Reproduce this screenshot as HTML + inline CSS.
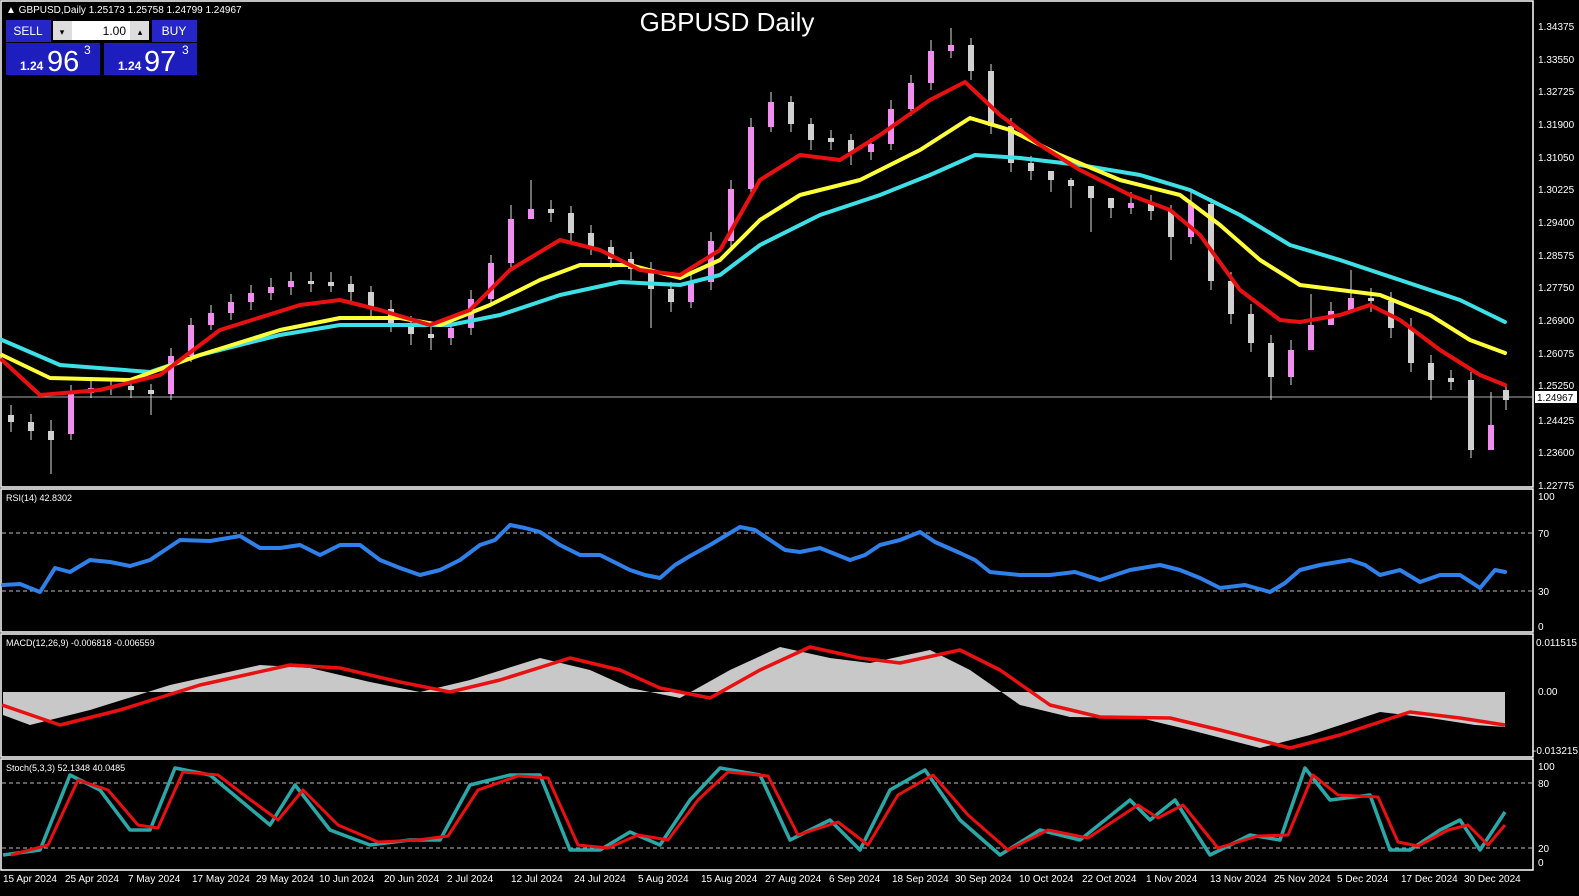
<!DOCTYPE html>
<html><head><meta charset="utf-8"><style>
html,body{margin:0;padding:0;background:#000;width:1579px;height:896px;overflow:hidden}
svg{display:block}
text{font-family:"Liberation Sans",sans-serif}
</style></head><body>
<svg width="1579" height="896" viewBox="0 0 1579 896" xmlns="http://www.w3.org/2000/svg">
<rect width="1579" height="896" fill="#000"/>
<g stroke="#fff" stroke-width="1.5" fill="none">
<rect x="1" y="1" width="1532" height="486"/>
<rect x="1" y="489" width="1532" height="143"/>
<rect x="1" y="634" width="1532" height="123"/>
<rect x="1" y="759" width="1532" height="111"/>
</g>
<g stroke="#bbb" stroke-dasharray="4,3" stroke-width="1">
<line x1="2" y1="533" x2="1532" y2="533"/><line x1="2" y1="591" x2="1532" y2="591"/>
<line x1="2" y1="783" x2="1532" y2="783"/><line x1="2" y1="848" x2="1532" y2="848"/>
</g>
<line x1="2" y1="397" x2="1532" y2="397" stroke="#aaa" stroke-width="1"/>

<!-- MACD histogram -->
<polygon fill="#c8c8c8" points="3,692 3,715 30,725 90,710 170,685 260,665 310,668 370,682 420,692 470,680 540,658 590,670 630,688 680,698 730,670 780,647 830,658 870,663 930,650 970,670 1020,705 1070,717 1140,718 1190,730 1260,748 1310,735 1380,712 1430,718 1475,725 1505,727 1505,692"/>

<!-- candle wicks -->
<path fill="none" stroke="#ddd" stroke-width="1" d="M11 405V432 M31 414V440 M51 420V474 M71 385V440 M91 380V398 M111 378V395 M131 380V398 M151 384V415 M171 348V400 M191 318V362 M211 305V330 M231 294V320 M251 285V310 M271 278V300 M291 272V295 M311 272V292 M331 272V292 M351 276V302 M371 286V318 M391 300V332 M411 316V345 M431 326V350 M451 320V345 M471 290V335 M491 255V305 M511 205V270 M531 180V218 M551 200V222 M571 206V242 M591 225V255 M611 240V268 M631 252V280 M651 262V328 M671 282V312 M691 274V308 M711 232V290 M731 180V248 M751 118V196 M771 92V132 M791 96V132 M811 118V150 M831 130V150 M851 134V165 M871 138V160 M891 100V150 M911 75V116 M931 40V90 M951 28V58 M971 38V80 M991 64V134 M1011 118V172 M1031 156V180 M1051 172V192 M1071 178V208 M1091 190V232 M1111 198V218 M1131 192V214 M1151 195V220 M1171 205V260 M1191 190V244 M1211 198V290 M1231 272V324 M1251 304V352 M1271 335V400 M1291 340V385 M1311 294V335 M1331 302V320 M1351 270V306 M1371 288V312 M1391 292V338 M1411 318V372 M1431 355V400 M1451 370V390 M1471 372V458 M1491 392V448 M1506 385V410"/>
<!-- grey bodies -->
<path fill="none" stroke="#d0d0d0" stroke-width="6" d="M11 415V422 M31 422V431 M51 431V440 M131 386V390 M151 390V394 M311 281V284 M331 282V286 M351 284V292 M371 292V309 M391 309V324 M411 324V334 M431 334V338 M551 209V213 M571 213V233 M591 233V247 M611 247V259 M631 259V269 M651 269V289 M671 289V302 M791 102V124 M811 124V140 M831 138V142 M851 140V152 M971 45V71 M991 71V126 M1011 126V163 M1031 163V171 M1051 171V180 M1071 180V186 M1091 186V198 M1111 198V208 M1151 203V211 M1171 211V237 M1211 204V281 M1231 281V314 M1251 314V343 M1271 343V377 M1371 298V301 M1391 301V328 M1411 328V363 M1431 363V380 M1451 378V382 M1471 380V450 M1506 390V400"/>
<!-- pink bodies -->
<path fill="none" stroke="#f08ef0" stroke-width="6" d="M71 434V393 M91 393V388 M111 388V386 M171 394V356 M191 356V325 M211 325V313 M231 313V302 M251 302V293 M271 293V287 M291 287V281 M451 338V328 M471 328V299 M491 299V263 M511 263V219 M531 219V209 M691 302V282 M711 282V241 M731 241V189 M751 189V127 M771 127V102 M871 152V144 M891 144V109 M911 109V83 M931 83V51 M951 51V45 M1131 208V203 M1191 237V204 M1291 377V350 M1311 350V325 M1331 325V311 M1351 311V298 M1491 450V425"/>

<!-- MAs -->
<g fill="none" stroke-width="4" stroke-linejoin="round" stroke-linecap="round">
<polyline stroke="#3ee0e8" points="2,340 60,365 150,372 200,355 280,335 340,325 400,325 450,325 500,315 560,295 620,282 680,285 720,275 760,245 820,215 880,195 930,175 975,155 1020,158 1080,165 1140,175 1190,190 1240,215 1290,245 1340,260 1400,280 1460,300 1505,322"/>
<polyline stroke="#ffff3a" points="2,355 50,378 130,380 200,355 280,330 340,318 400,318 440,325 490,305 540,280 580,265 630,265 680,278 720,260 760,220 800,195 860,180 920,150 970,118 1010,130 1060,155 1120,180 1180,195 1220,225 1260,260 1300,285 1340,290 1380,295 1430,315 1470,340 1505,353"/>
<polyline stroke="#e81010" points="2,360 40,395 100,390 160,375 220,330 300,305 340,300 380,310 430,325 470,310 510,270 560,240 600,250 640,270 680,275 720,250 760,180 800,155 840,160 880,135 930,100 965,82 1000,115 1040,145 1080,170 1130,195 1170,210 1200,235 1240,290 1280,320 1300,322 1340,315 1370,305 1400,320 1440,350 1480,375 1505,385"/>
<polyline stroke="#2f80e8" points="3,585 20,584 40,592 55,568 70,572 90,560 110,562 130,566 150,560 180,540 210,541 240,536 260,548 280,548 300,545 320,555 340,545 360,545 380,560 400,568 420,575 440,570 460,560 480,545 495,540 510,525 525,528 540,532 560,545 580,555 600,555 630,570 645,575 660,578 675,565 690,556 710,545 740,527 755,530 770,540 785,550 800,552 820,548 850,560 865,555 880,545 900,540 920,532 935,542 960,553 975,560 990,572 1020,575 1050,575 1075,572 1100,580 1130,570 1160,565 1180,570 1200,578 1220,588 1245,585 1270,592 1285,583 1300,570 1320,565 1350,560 1365,565 1380,575 1400,570 1420,582 1440,575 1460,575 1480,588 1495,570 1505,572"/>
</g>
<polyline fill="none" stroke="#e81010" stroke-width="3.5" stroke-linejoin="round" points="2,705 60,725 120,710 200,685 290,665 340,668 400,682 450,692 500,680 570,658 620,670 660,688 710,698 760,670 810,647 860,658 900,663 960,650 1000,670 1050,705 1100,717 1170,718 1220,730 1290,748 1340,735 1410,712 1460,718 1505,725"/>
<g fill="none" stroke-linejoin="round">
<polyline stroke="#2aa8a8" stroke-width="3.5" points="3,855 40,850 70,775 100,790 130,830 150,830 175,768 210,775 240,800 270,825 295,785 330,830 370,845 410,840 440,840 470,785 510,775 540,775 570,850 600,850 630,832 660,845 690,800 720,768 760,775 790,840 830,820 860,850 890,790 925,770 960,820 1000,855 1040,830 1080,840 1130,800 1150,820 1175,800 1210,855 1250,835 1280,840 1305,768 1330,800 1370,795 1390,850 1410,850 1440,830 1460,820 1480,850 1505,812"/>
<polyline stroke="#e81010" stroke-width="3" points="11,855 48,845 78,780 108,790 138,825 158,828 183,772 218,775 248,798 278,820 303,790 338,825 378,842 418,840 448,836 478,790 518,776 548,778 578,845 608,848 638,835 668,840 698,800 728,772 768,776 798,835 838,822 868,845 898,795 933,775 968,815 1008,850 1048,830 1088,838 1138,805 1158,818 1183,805 1218,848 1258,836 1288,835 1313,775 1338,795 1378,797 1398,842 1418,846 1448,830 1468,825 1488,845 1505,825"/>
</g>

<text x="727" y="31" fill="#fff" font-size="26" text-anchor="middle">GBPUSD Daily</text>
<text x="6" y="13" fill="#fff" font-size="10">▲ GBPUSD,Daily  1.25173 1.25758 1.24799 1.24967</text>
<rect x="6" y="20" width="45" height="22" fill="#2626c8"/><text x="28" y="35" fill="#fff" font-size="12" text-anchor="middle">SELL</text>
<rect x="53" y="21" width="96" height="19" fill="#fff"/><rect x="53" y="21" width="19" height="19" fill="#ddd"/><rect x="130" y="21" width="19" height="19" fill="#ddd"/>
<text x="62" y="35" font-size="9" text-anchor="middle">▾</text><text x="140" y="35" font-size="9" text-anchor="middle">▴</text>
<text x="126" y="35" font-size="12" text-anchor="end">1.00</text>
<rect x="152" y="20" width="45" height="22" fill="#2626c8"/><text x="174" y="35" fill="#fff" font-size="12" text-anchor="middle">BUY</text>
<rect x="6" y="43" width="94" height="32" fill="#1e1ebe"/><rect x="104" y="43" width="93" height="32" fill="#1e1ebe"/>
<text x="20" y="70" fill="#fff" font-size="12" font-weight="bold">1.24</text><text x="47" y="71" fill="#fff" font-size="29">96</text><text x="84" y="54" fill="#fff" font-size="12">3</text>
<text x="118" y="70" fill="#fff" font-size="12" font-weight="bold">1.24</text><text x="144" y="71" fill="#fff" font-size="29">97</text><text x="182" y="54" fill="#fff" font-size="12">3</text>
<g fill="#fff" font-size="10">
<text x="1538" y="30">1.34375</text><text x="1538" y="63">1.33550</text><text x="1538" y="95">1.32725</text><text x="1538" y="128">1.31900</text><text x="1538" y="161">1.31050</text><text x="1538" y="193">1.30225</text><text x="1538" y="226">1.29400</text><text x="1538" y="259">1.28575</text><text x="1538" y="291">1.27750</text><text x="1538" y="324">1.26900</text><text x="1538" y="357">1.26075</text><text x="1538" y="389">1.25250</text><text x="1538" y="424">1.24425</text><text x="1538" y="456">1.23600</text><text x="1538" y="489">1.22775</text>
<rect x="1535" y="391" width="42" height="12" fill="#fff"/><text x="1537" y="401" fill="#000">1.24967</text>
<text x="1538" y="500">100</text><text x="1538" y="537">70</text><text x="1538" y="595">30</text><text x="1538" y="630">0</text>
<text x="1536" y="646">0.011515</text><text x="1538" y="695">0.00</text><text x="1533" y="754">-0.013215</text>
<text x="1538" y="770">100</text><text x="1538" y="787">80</text><text x="1538" y="852">20</text><text x="1538" y="866">0</text>
<text x="6" y="501" font-size="9">RSI(14) 42.8302</text>
<text x="6" y="646" font-size="9">MACD(12,26,9) -0.006818 -0.006559</text>
<text x="6" y="771" font-size="9">Stoch(5,3,3) 52.1348 40.0485</text>
</g>
<g fill="#fff" font-size="10">
<text x="3" y="882">15 Apr 2024</text><text x="65" y="882">25 Apr 2024</text><text x="128" y="882">7 May 2024</text><text x="192" y="882">17 May 2024</text><text x="256" y="882">29 May 2024</text><text x="319" y="882">10 Jun 2024</text><text x="384" y="882">20 Jun 2024</text><text x="447" y="882">2 Jul 2024</text><text x="511" y="882">12 Jul 2024</text><text x="574" y="882">24 Jul 2024</text><text x="638" y="882">5 Aug 2024</text><text x="701" y="882">15 Aug 2024</text><text x="765" y="882">27 Aug 2024</text><text x="829" y="882">6 Sep 2024</text><text x="892" y="882">18 Sep 2024</text><text x="955" y="882">30 Sep 2024</text><text x="1019" y="882">10 Oct 2024</text><text x="1082" y="882">22 Oct 2024</text><text x="1146" y="882">1 Nov 2024</text><text x="1210" y="882">13 Nov 2024</text><text x="1274" y="882">25 Nov 2024</text><text x="1337" y="882">5 Dec 2024</text><text x="1401" y="882">17 Dec 2024</text><text x="1464" y="882">30 Dec 2024</text>
</g>
</svg>
</body></html>
